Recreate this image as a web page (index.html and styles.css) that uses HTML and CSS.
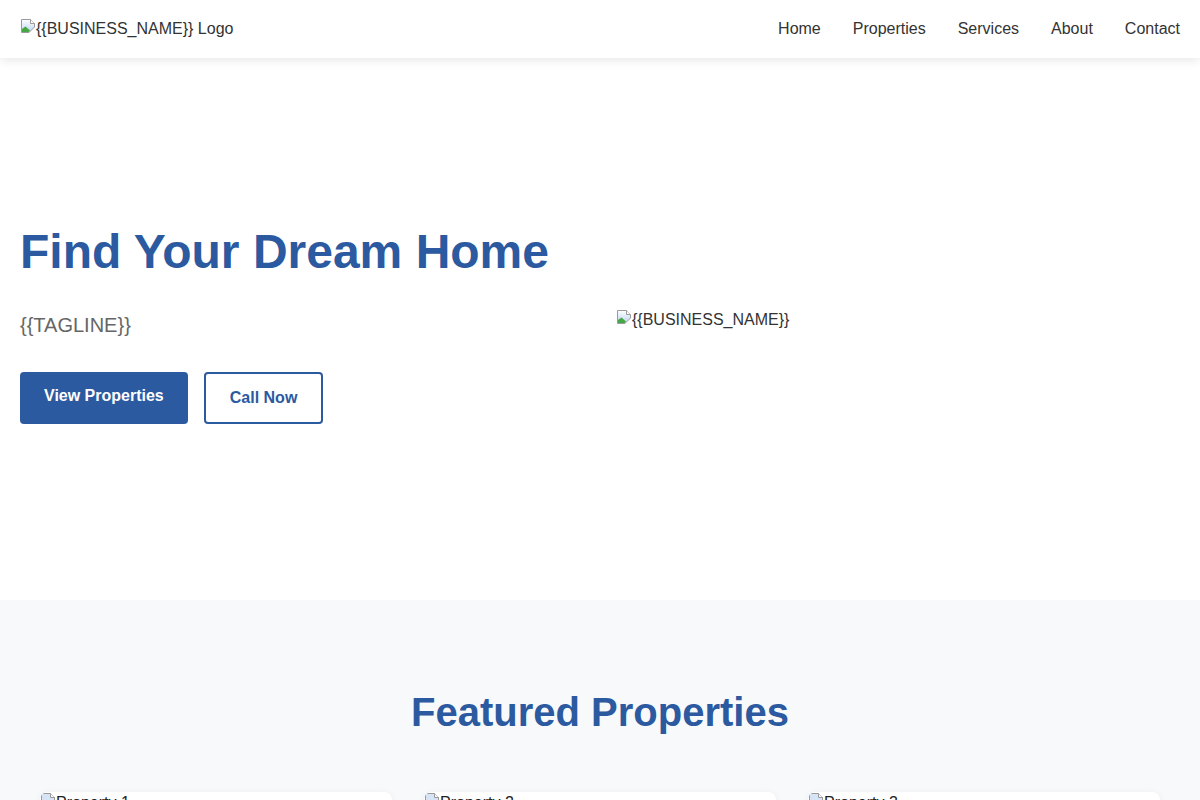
FILE: index.html
```html
<!DOCTYPE html>
<html lang="en">
<head>
<meta charset="utf-8">
<title>{{BUSINESS_NAME}}</title>
<link rel="stylesheet" href="styles.css">
</head>
<body>
<header class="site-header">
  <a class="logo" href="#"><svg class="broken" width="16" height="16" viewBox="0 0 16 16"><defs><linearGradient id="sky1" x1="0" y1="0" x2="0" y2="1"><stop offset="0" stop-color="#ffffff"/><stop offset="1" stop-color="#b9d3f0"/></linearGradient></defs><path d="M1.5 1.5H10.5L14.5 5.5V9L9 14.5H1.5Z" fill="url(#sky1)" stroke="#9a9a9a"/><path d="M10.5 1.5V5.5H14.5" fill="#fff" stroke="#9a9a9a"/><path d="M2 14V11L5.5 8.5L10 12.5L8.5 14Z" fill="#45a845"/></svg>{{BUSINESS_NAME}} Logo</a>
  <nav class="nav">
    <a href="#">Home</a>
    <a href="#">Properties</a>
    <a href="#">Services</a>
    <a href="#">About</a>
    <a href="#">Contact</a>
  </nav>
</header>

<section class="hero">
  <div class="hero-text">
    <h1>Find Your Dream Home</h1>
    <p class="tagline">{{TAGLINE}}</p>
    <div class="hero-actions">
      <a class="btn btn-primary" href="#">View Properties</a>
      <a class="btn btn-outline" href="#">Call Now</a>
    </div>
  </div>
  <div class="hero-image"><svg class="broken" width="16" height="16" viewBox="0 0 16 16"><defs><linearGradient id="sky2" x1="0" y1="0" x2="0" y2="1"><stop offset="0" stop-color="#ffffff"/><stop offset="1" stop-color="#b9d3f0"/></linearGradient></defs><path d="M1.5 1.5H10.5L14.5 5.5V9L9 14.5H1.5Z" fill="url(#sky2)" stroke="#9a9a9a"/><path d="M10.5 1.5V5.5H14.5" fill="#fff" stroke="#9a9a9a"/><path d="M2 14V11L5.5 8.5L10 12.5L8.5 14Z" fill="#45a845"/></svg>{{BUSINESS_NAME}}</div>
</section>

<section class="featured">
  <h2>Featured Properties</h2>
  <div class="cards">
    <article class="card">
      <div class="card-img"><svg class="broken" width="16" height="16" viewBox="0 0 16 16"><path d="M1.5 1.5H10.5L14.5 5.5V9L9 14.5H1.5Z" fill="#d6e4f5" stroke="#9a9a9a"/><path d="M10.5 1.5V5.5H14.5" fill="#fff" stroke="#9a9a9a"/><path d="M2 14V11L5.5 8.5L10 12.5L8.5 14Z" fill="#45a845"/></svg>Property 1</div>
      <div class="card-body"><h3>Property 1</h3><p>{{PROPERTY_DESCRIPTION}}</p></div>
    </article>
    <article class="card">
      <div class="card-img"><svg class="broken" width="16" height="16" viewBox="0 0 16 16"><path d="M1.5 1.5H10.5L14.5 5.5V9L9 14.5H1.5Z" fill="#d6e4f5" stroke="#9a9a9a"/><path d="M10.5 1.5V5.5H14.5" fill="#fff" stroke="#9a9a9a"/><path d="M2 14V11L5.5 8.5L10 12.5L8.5 14Z" fill="#45a845"/></svg>Property 2</div>
      <div class="card-body"><h3>Property 2</h3><p>{{PROPERTY_DESCRIPTION}}</p></div>
    </article>
    <article class="card">
      <div class="card-img"><svg class="broken" width="16" height="16" viewBox="0 0 16 16"><path d="M1.5 1.5H10.5L14.5 5.5V9L9 14.5H1.5Z" fill="#d6e4f5" stroke="#9a9a9a"/><path d="M10.5 1.5V5.5H14.5" fill="#fff" stroke="#9a9a9a"/><path d="M2 14V11L5.5 8.5L10 12.5L8.5 14Z" fill="#45a845"/></svg>Property 3</div>
      <div class="card-body"><h3>Property 3</h3><p>{{PROPERTY_DESCRIPTION}}</p></div>
    </article>
  </div>
</section>
</body>
</html>
```

FILE: styles.css
```css
* { box-sizing: border-box; }

body {
  margin: 0;
  font-family: "Liberation Sans", Arial, sans-serif;
  color: #333;
  background: #fff;
}

a { text-decoration: none; }

.broken { vertical-align: baseline; }

.site-header {
  position: relative;
  z-index: 2;
  height: 58px;
  padding: 0 20px;
  display: flex;
  align-items: center;
  justify-content: space-between;
  background: #fff;
  box-shadow: 0 2px 10px rgba(0, 0, 0, 0.1);
}

.logo {
  color: #333;
  font-size: 16px;
  line-height: 18px;
  margin-bottom: 2px;
}

.nav {
  display: flex;
  gap: 32px;
  font-size: 16px;
}

.nav a { color: #333; }

.hero {
  height: 542px;
  padding: 165px 20px 0;
  display: grid;
  grid-template-columns: 1fr 1fr;
  column-gap: 32px;
  align-content: start;
  align-items: start;
}

.hero h1 {
  margin: 0 0 28px;
  font-size: 48px;
  line-height: 1.2;
  font-weight: 700;
  color: #2c5aa0;
}

.tagline {
  margin: 0 0 31px;
  font-size: 20px;
  line-height: 1.6;
  color: #666;
}

.hero-actions {
  display: flex;
  gap: 16px;
}

.btn {
  display: inline-block;
  font-size: 16px;
  line-height: 20px;
  font-weight: 700;
  border-radius: 4px;
}

.btn-primary {
  background: #2c5aa0;
  color: #fff;
  padding: 14px 24px 18px;
}

.btn-outline {
  background: #fff;
  color: #2c5aa0;
  border: 2px solid #2c5aa0;
  padding: 14px 24px;
}

.hero-image {
  align-self: center;
  margin-bottom: 8px;
  font-size: 16px;
  color: #333;
}

.featured {
  background: #f8f9fa;
  padding: 88px 20px 80px;
}

.featured h2 {
  margin: 0 0 56px;
  text-align: center;
  font-size: 40px;
  line-height: 48px;
  font-weight: 700;
  color: #2c5aa0;
}

.cards {
  margin: 0 20px;
  display: grid;
  grid-template-columns: repeat(3, 1fr);
  gap: 32px;
}

.card {
  background: #fff;
  border-radius: 8px;
  overflow: hidden;
  box-shadow: 0 2px 10px rgba(0, 0, 0, 0.06);
}

.card-img {
  height: 220px;
  font-size: 16px;
  color: #222;
}

.card-body {
  padding: 20px;
}

.card-body h3 {
  margin: 0 0 8px;
  color: #2c5aa0;
  font-size: 20px;
}

.card-body p {
  margin: 0;
  color: #666;
}
```
